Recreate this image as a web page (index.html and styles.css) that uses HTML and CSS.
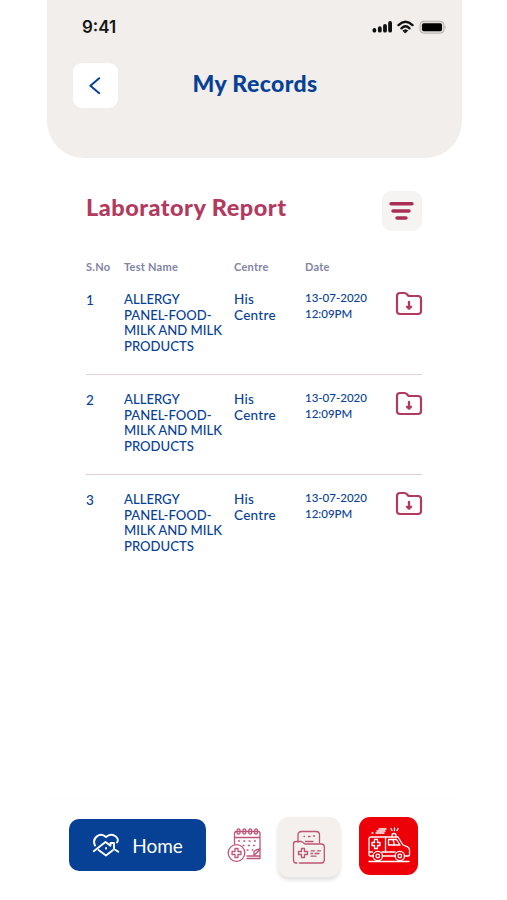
FILE: index.html
```html
<!DOCTYPE html>
<html lang="en">

<head>
  <meta charset="UTF-8">
  <meta name="viewport" content="width=device-width, initial-scale=1.0">
  <title>My Records</title>
  <link rel="stylesheet" href="styles.css">
</head>

<body>
  <!-- shared icon -->
  <svg class="defs" width="0" height="0">
    <symbol id="download" viewBox="0 0 28 26">
      <path d="M2 5Q2 2 5 2H9.5Q11 2 12 3.2L13.5 5H23Q26 5 26 8V20Q26 23 23 23H5Q2 23 2 20Z" stroke-width="2.2" />
      <path d="M14 11V17.5M12 15.7L14 17.7L16 15.7" stroke-width="2.3" />
    </symbol>
  </svg>

  <div class="phone">
    <header class="header">
      <div class="status">
        <span class="time">9:41</span>
        <svg class="status-icons" width="76" height="16" viewBox="0 0 76 16">
          <g stroke="#111" stroke-width="3.8" stroke-linecap="round">
            <path d="M3.4 11V11.7M8.8 9.2V11.7M14 6.8V11.7M19.1 4V11.7" />
          </g>
          <g fill="none" stroke="#111" stroke-width="2.4">
            <path d="M27.500 6.100Q34.500-0.500 41.500 6.100M30.500 9.300Q34.500 5.400 38.500 9.300" />
          </g>
          <path d="M32.300 11.500Q34.500 9.900 36.700 11.500L34.500 13.800Z" fill="#111" stroke="#111" />
          <rect x="49" y="2.2" width="24" height="12" rx="3.6" fill="#dedbd9" stroke="#b4b2b0" />
          <rect x="51" y="4.2" width="20" height="8" rx="1.8" fill="#000" />
          <path d="M74.3 6.5Q76 8.3 74.3 10Z" fill="#a8a6a4" />
        </svg>
      </div>
      <div class="title-bar">
        <button class="back">
          <svg width="14" height="20" viewBox="0 0 14 20">
            <path d="M10.2 2.2L1.4 9.8L10.2 17.2" />
          </svg>
        </button>
        <h1>My Records</h1>
      </div>
    </header>

    <main class="content">
      <div class="section-head">
        <h2>Laboratory Report</h2>
        <button class="filter">
          <svg width="28" height="20" viewBox="0 0 28 20">
            <path d="M3 2.7H24M5 10H21M9 17H18" />
          </svg>
        </button>
      </div>

      <div class="row labels">
        <span>S.No</span>
        <span>Test Name</span>
        <span>Centre</span>
        <span>Date</span>
      </div>

      <div class="row record">
        <span class="num">1</span>
        <span class="test">ALLERGY<br>PANEL-FOOD-<br>MILK AND MILK<br>PRODUCTS</span>
        <span class="centre">His<br>Centre</span>
        <span class="date">13-07-2020<br>12:09PM</span>
        <svg class="download"><use href="#download" /></svg>
      </div>
      <div class="row record">
        <span class="num">2</span>
        <span class="test">ALLERGY<br>PANEL-FOOD-<br>MILK AND MILK<br>PRODUCTS</span>
        <span class="centre">His<br>Centre</span>
        <span class="date">13-07-2020<br>12:09PM</span>
        <svg class="download"><use href="#download" /></svg>
      </div>
      <div class="row record">
        <span class="num">3</span>
        <span class="test">ALLERGY<br>PANEL-FOOD-<br>MILK AND MILK<br>PRODUCTS</span>
        <span class="centre">His<br>Centre</span>
        <span class="date">13-07-2020<br>12:09PM</span>
        <svg class="download"><use href="#download" /></svg>
      </div>
    </main>

    <nav class="nav">
      <button class="home">
        <!-- heart with a house inside -->
        <svg width="28" height="24" viewBox="0 0 28 24">
          <path d="M3 12.500C-.5 5 8-1.500 14 4C20-1.500 28.500 5 25 9.500" />
          <path d="M1.700 18.200L13.500 9L18.500 12.800V10H22V16L26.300 18.800" />
          <path d="M6.500 17L14 22.500L20.800 17.300" />
          <path d="M14 15V15.500" />
        </svg>
        <span>Home</span>
      </button>

      <button class="calendar">
        <svg width="36" height="38" viewBox="0 0 36 38">
          <path d="M7.500 17V6.500Q7.500 4.500 9.500 4.500H31Q33 4.500 33 6.500V31.500H20M8 10.500H33M20 29H33" />
          <g stroke-width="1.200">
            <ellipse cx="11.500" cy="4.500" rx="1.600" ry="2.600" />
            <ellipse cx="17.300" cy="4.500" rx="1.600" ry="2.600" />
            <ellipse cx="23.200" cy="4.500" rx="1.600" ry="2.600" />
            <ellipse cx="29" cy="4.500" rx="1.600" ry="2.600" />
          </g>
          <path d="M11.500 14H30M16 18.500H30M20 23H26" stroke-dasharray="1 4.300" />
          <path d="M27 28V24.500L29 23L33 22M27.500 28L32 23.500" />
          <circle cx="9.500" cy="26" r="8.300" />
          <path class="cross" d="M8 21.500H11V24.500H14V27.500H11V30.500H8V27.500H5V24.500H8Z" />
        </svg>
      </button>

      <button class="records">
        <svg width="34" height="34" viewBox="0 0 34 34">
          <path d="M6 12V5Q6 1.500 9.500 1.500H24Q27.500 1.500 27.500 5V12.500" />
          <path d="M5 33H4Q1.500 33 1.500 30V14Q1.500 11.500 4 11.500H9.500L13 14H29.500Q32.300 14 32.300 17V30Q32.300 33 29.500 33H7.500" />
          <path d="M12 6.500H12.500M16.500 6.500H18M21.500 6H22.500M13.500 11.500H21" />
          <path class="cross" d="M9.500 18.500H12.500V21.500H15.500V24.500H12.500V27.500H9.500V24.500H6.500V21.500H9.500Z" />
          <path d="M19 20.800H22.500M25.500 20.800H28.500M19 23.500H20.500M23 23.500H27M19 26.200H24" />
        </svg>
      </button>

      <button class="ambulance">
        <svg width="44" height="38" viewBox="0 0 44 38">
          <path d="M6 29H3.500Q2 29 2 27.500V12Q2 10 4 10H31L36 18L40.500 19.800Q42.500 20.600 42.500 23V28Q42.500 29 41 29H37.500M15.500 29H28M2 25H5.500M15 25H28" />
          <path d="M18.500 10V25M21.500 12.500H29.500L33 18H21.500ZM26 12.500L27.500 18" />
          <path d="M25 10V8.500Q25 6.500 27 6.500T29 8.500V10M24 1.500L25 3.500M27.500 1V3.500M31 1.500L30 3.500" />
          <circle cx="10.800" cy="29" r="4.700" />
          <circle cx="10.800" cy="29" r="1.800" />
          <circle cx="32.800" cy="29" r="4.700" />
          <circle cx="32.800" cy="29" r="1.800" />
          <path class="cross" d="M7.500 12.300H10.500V15.500H13V18.500H10.500V21.500H7.500V18.500H5V15.500H7.500Z" />
          <path d="M12 2H19M10 4H18M5 6H6M9 6H17M2 34.500H42" />
        </svg>
      </button>
    </nav>
  </div>
</body>

</html>
```

FILE: styles.css
```css
* {
  box-sizing: border-box;
}

body {
  margin: 0;
  background-color: #ffffff;
  font-family: Lato, sans-serif;
  color: #064196;
}

button {
  display: flex;
  align-items: center;
  justify-content: center;
  padding: 0;
  border: none;
  background: none;
  font-family: inherit;
  cursor: pointer;
}

svg {
  fill: none;
  stroke-linecap: round;
  stroke-linejoin: round;
}

.defs {
  display: block;
}

.phone {
  display: flex;
  flex-direction: column;
  width: 415px;
  height: 900px;
  margin-left: 47px;
}

.header {
  height: 158px;
  border-radius: 0 0 37px 37px;
  background-color: #f2eeeb;
}

.status {
  display: flex;
  align-items: center;
  justify-content: space-between;
  height: 36px;
  padding: 17px 15px 0 35px;
}

.time {
  font-family: Inter, sans-serif;
  font-size: 17px;
  font-weight: 600;
  line-height: 20px;
  color: #151515;
}

.title-bar {
  display: grid;
  grid-template-columns: 45px 1fr 45px;
  align-items: center;
  padding: 27px 25px 0 26px;
}

.back {
  width: 45px;
  height: 45px;
  border-radius: 9px;
  background-color: #ffffff;
}

.back svg {
  stroke: #064196;
  stroke-width: 2;
}

h1 {
  margin: 0 0 6px;
  font-size: 23px;
  font-weight: 900;
  letter-spacing: 0.4px;
  line-height: 28px;
  text-align: center;
}

.content {
  flex: 1;
  padding: 33px 40px 0 39px;
}

.section-head {
  display: flex;
  justify-content: space-between;
}

h2 {
  margin: 2px 0 0;
  font-size: 23.5px;
  font-weight: 900;
  letter-spacing: 0.48px;
  line-height: 28px;
  color: #b23a5e;
}

.filter {
  width: 40px;
  height: 40px;
  border-radius: 9px;
  background-color: #f6f4f2;
}

.filter svg {
  stroke: #a92f59;
  stroke-width: 3.4;
}

.row {
  display: grid;
  grid-template-columns: 38px 110px 71px 90px 28px;
}

.labels {
  padding: 28px 0 9px;
  font-size: 11px;
  font-weight: 700;
  letter-spacing: 0.25px;
  line-height: 16px;
  color: #8084a6;
}

.record {
  height: 100px;
  padding-top: 8px;
  font-size: 13.5px;
  font-weight: 500;
  line-height: 15.6px;
}

.record + .record {
  border-top: 1px solid #e6cdd1;
  padding-top: 17px;
}

.record:nth-child(3) {
  height: 90px;
}

.num {
  padding-top: 1px;
}

.test {
  font-size: 13.1px;
}

.centre {
  letter-spacing: 0.3px;
}

.date {
  font-size: 11.5px;
  margin-top: -2px;
}

.download {
  width: 28px;
  height: 26px;
  margin-top: -1px;
  stroke: #b23a5e;
}

.nav {
  display: flex;
  height: 103px;
  padding: 19px 22px 0;
  border-top: 1px solid #fcfcfc;
}

.home {
  gap: 12px;
  width: 137px;
  height: 52px;
  margin-top: 2px;
  border-radius: 10px;
  background-color: #064196;
  color: #ffffff;
  font-size: 19px;
}

.home svg {
  stroke: #ffffff;
  stroke-width: 1.9;
}

.calendar {
  width: 36px;
  height: 56px;
  margin: 1px 15px 0 21px;
}

.calendar svg,
.records svg {
  stroke: #bd5577;
  stroke-width: 1.3;
}

.records {
  width: 62px;
  height: 60px;
  border-radius: 11px;
  background-color: #f3f0ed;
  box-shadow: 0 3px 4px rgba(0, 0, 0, 0.13);
}

.ambulance {
  width: 59px;
  height: 58px;
  margin-left: 19px;
  border-radius: 11px;
  background-color: #ed0008;
}

.ambulance svg {
  stroke: #ffffff;
  stroke-width: 1.3;
}
```
